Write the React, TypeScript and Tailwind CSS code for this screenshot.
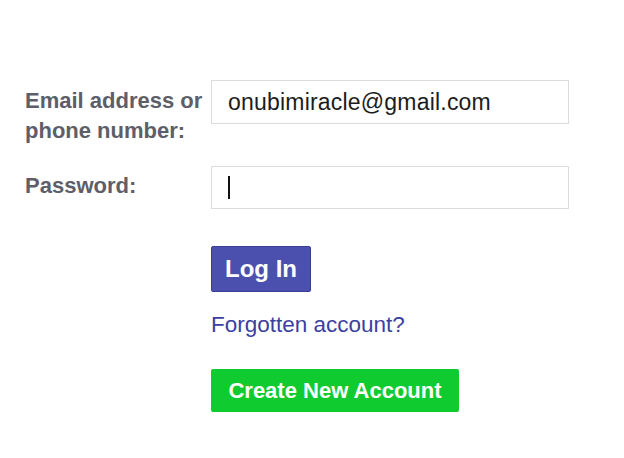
import React from "react";

const App = () => {
    return (
        <div className="w-[624px] h-[458px] bg-white pt-[80px] pl-[25px] font-['Liberation_Sans',Arial,sans-serif]">
            <div className="grid grid-cols-[186px_358px] gap-y-[20px]">
                <label className="text-[22px] leading-[30px] font-bold text-[#5e5e68] pt-[6px]">
                    Email address or
                    <br />
                    phone number:
                </label>
                <div className="h-[44px] border border-[#dcdcdc] flex items-center px-[16px] text-[23px] tracking-[0.2px] text-[#1c1c1c]">
                    onubimiracle@gmail.com
                </div>

                <label className="text-[22px] leading-[30px] font-bold text-[#5e5e68] pt-[5px]">Password:</label>
                <div className="h-[43px] border border-[#dcdcdc] flex items-center px-[16px]">
                    <span className="w-[2px] h-[23px] bg-[#111]" />
                </div>
            </div>

            <div className="ml-[186px] mt-[37px] flex flex-col items-start">
                <button className="h-[46px] px-[13px] bg-[#4b4fae] border border-[#3b3e92] rounded-[2px] text-white text-[24px] font-bold">
                    Log In
                </button>
                <a className="mt-[20px] block leading-[26px] text-[22.5px] text-[#3b3fa1]">Forgotten account?</a>
                <button className="mt-[31px] h-[43px] w-[248px] bg-[#10cb2f] rounded-[2px] text-white text-[22px] font-bold">
                    Create New Account
                </button>
            </div>
        </div>
    );
};

export default App;
